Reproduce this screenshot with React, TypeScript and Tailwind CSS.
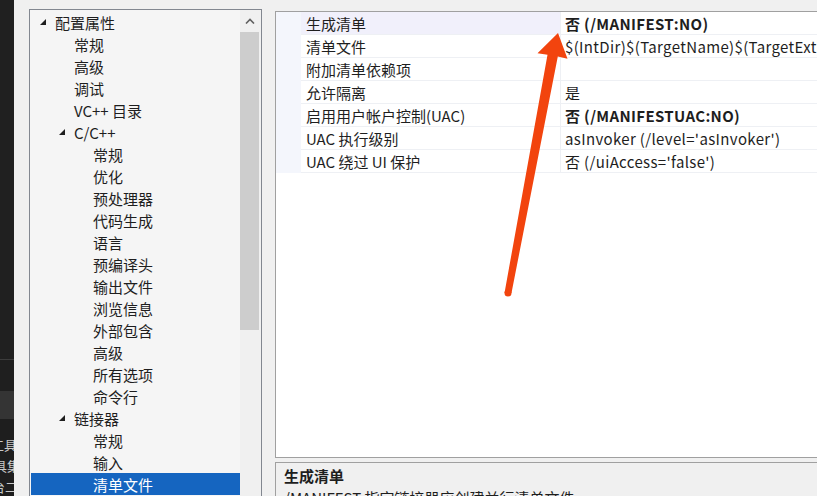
import React from "react";

type Node = { label: string; level: number; expanded?: boolean; selected?: boolean };

const tree: Node[] = [
  { label: "配置属性", level: 0, expanded: true },
  { label: "常规", level: 1 },
  { label: "高级", level: 1 },
  { label: "调试", level: 1 },
  { label: "VC++ 目录", level: 1 },
  { label: "C/C++", level: 1, expanded: true },
  { label: "常规", level: 2 },
  { label: "优化", level: 2 },
  { label: "预处理器", level: 2 },
  { label: "代码生成", level: 2 },
  { label: "语言", level: 2 },
  { label: "预编译头", level: 2 },
  { label: "输出文件", level: 2 },
  { label: "浏览信息", level: 2 },
  { label: "外部包含", level: 2 },
  { label: "高级", level: 2 },
  { label: "所有选项", level: 2 },
  { label: "命令行", level: 2 },
  { label: "链接器", level: 1, expanded: true },
  { label: "常规", level: 2 },
  { label: "输入", level: 2 },
  { label: "清单文件", level: 2, selected: true },
];

const props: { name: string; value: string; bold?: boolean }[] = [
  { name: "生成清单", value: "否 (/MANIFEST:NO)", bold: true },
  { name: "清单文件", value: "$(IntDir)$(TargetName)$(TargetExt)" },
  { name: "附加清单依赖项", value: "" },
  { name: "允许隔离", value: "是" },
  { name: "启用用户帐户控制(UAC)", value: "否 (/MANIFESTUAC:NO)", bold: true },
  { name: "UAC 执行级别", value: "asInvoker (/level='asInvoker')" },
  { name: "UAC 绕过 UI 保护", value: "否 (/uiAccess='false')" },
];

const padClass = ["pl-[10px]", "pl-[29px]", "pl-[48px]"];

function Tri() {
  return (
    <svg width="6" height="6" viewBox="0 0 6 6" className="shrink-0">
      <polygon points="6,0 6,6 0,6" fill="#1e1e1e" />
    </svg>
  );
}

export default function App() {
  return (
    <div className="relative w-[817px] h-[496px] overflow-hidden bg-[#f0f0f0] flex font-['Noto_Sans_CJK_SC',sans-serif] text-[15px] leading-none text-[#1e1e1e]">
      {/* dark strip */}
      <div className="w-[14px] h-full shrink-0 flex flex-col bg-[#1f1f1f] overflow-hidden">
        <div className="h-[359px] shrink-0 bg-[#202020]" />
        <div className="h-px shrink-0 bg-[#3c3c3c]" />
        <div className="h-[31px] shrink-0 bg-[#1f1f1f]" />
        <div className="h-[28px] shrink-0 bg-[#343434]" />
        <div className="flex-1 bg-[#1e1e1e] pt-[19px] flex flex-col gap-[8px] text-[13px] text-[#c8c8c8]">
          <div className="ml-[-9px] whitespace-nowrap h-[13px]">工具</div>
          <div className="ml-[-6px] whitespace-nowrap h-[13px]">具集</div>
          <div className="ml-[-8px] whitespace-nowrap h-[13px]">台二</div>
        </div>
      </div>

      {/* tree panel */}
      <div className="ml-[15px] mt-[9px] w-[233px] h-[520px] shrink-0 border border-[#828790] bg-[#f5f5f5] flex">
        <div className="w-[210px] pt-px flex flex-col">
          {tree.map((n, i) => (
            <div
              key={i}
              className={`h-[22px] shrink-0 flex items-center whitespace-nowrap ${padClass[n.level]} ${
                n.selected ? "bg-[#1565c0] text-white ml-px" : ""
              }`}
            >
              <div className="w-[15px] flex items-center">{n.expanded ? <Tri /> : null}</div>
              <span className={n.selected ? "-ml-px" : ""}>{n.label}</span>
            </div>
          ))}
        </div>
        <div className="flex-1 bg-[#f0f0f0] flex flex-col">
          <div className="w-[19px] h-[22px] flex items-center justify-center">
            <svg width="10" height="6" viewBox="0 0 10 6">
              <polyline points="1,5.5 5,1.5 9,5.5" fill="none" stroke="#606060" strokeWidth="1.6" />
            </svg>
          </div>
          <div className="w-[19px] h-[298px] bg-[#cdcdcd]" />
        </div>
      </div>

      {/* right side */}
      <div className="ml-[13px] flex-1 min-w-0 h-full pt-[11px] flex flex-col">
        <div className="h-[447px] shrink-0 border-t border-l border-b border-[#a0a0a0] bg-white flex flex-col overflow-hidden">
          {props.map((p, i) => (
            <div key={i} className="h-[23px] flex shrink-0">
              <div className="w-[25px] bg-[#f4f6fc] shrink-0" />
              <div
                className={`w-[259px] shrink-0 border-b border-[#eef0f4] pl-[5px] flex items-center whitespace-nowrap ${
                  i === 0 ? "bg-[#f1f0fb]" : "bg-white"
                }`}
              >
                {p.name}
              </div>
              <div
                className={`flex-1 border-l border-b border-[#eef0f4] pl-[4px] flex items-center whitespace-nowrap overflow-hidden tracking-[0.35px] ${
                  p.bold ? "font-bold" : ""
                }`}
              >
                {p.value}
              </div>
            </div>
          ))}
        </div>
        <div className="mt-[4px] flex-1 min-h-0 overflow-hidden border-t border-l border-[#a0a0a0] bg-[#f0f0f0] pl-[8px] pt-[5px] flex flex-col gap-[7px]">
          <div className="font-bold whitespace-nowrap shrink-0">生成清单</div>
          <div className="whitespace-nowrap shrink-0">/MANIFEST 指定链接器应创建并行清单文件。</div>
        </div>
      </div>

      {/* red arrow annotation */}
      <svg className="absolute inset-0 pointer-events-none" width="817" height="496" viewBox="0 0 817 496">
        <polygon
          points="558,33 567.5,58.8 557.8,56.5 511.5,293 504.5,293 547.5,54.8 537.5,53.2"
          fill="#f2440e"
          strokeLinejoin="round"
        />
        <circle cx="508" cy="293" r="3.5" fill="#f2440e" />
      </svg>
    </div>
  );
}
